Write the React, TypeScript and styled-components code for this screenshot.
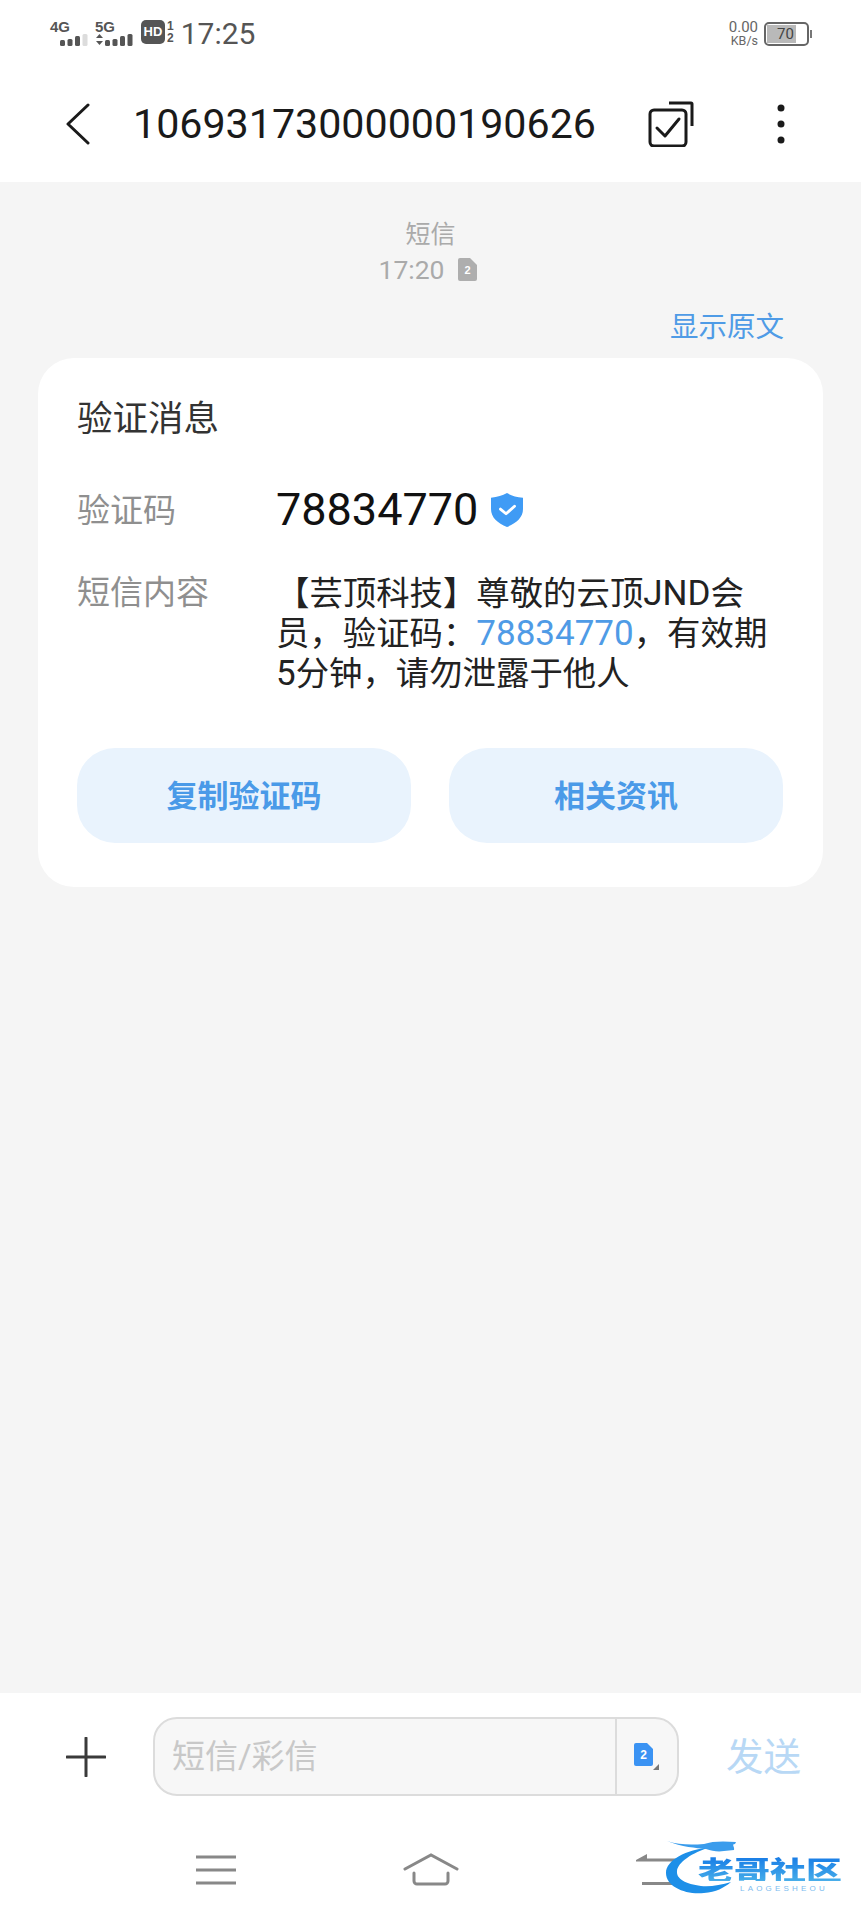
import styled, { createGlobalStyle } from "styled-components";

const GlobalStyle = createGlobalStyle`
  html, body {
    margin: 0;
    padding: 0;
    background: #ffffff;
  }
  * {
    box-sizing: border-box;
  }
`;

const FONT = `Roboto, "Noto Sans CJK SC", sans-serif`;

const Page = styled.div`
  width: 861px;
  height: 1920px;
  display: flex;
  flex-direction: column;
  background: #ffffff;
  font-family: ${FONT};
  overflow: hidden;
`;

// Status bar
const StatusBar = styled.div`
  height: 66px;
  padding: 20px 49px 0 50px;
  display: flex;
  justify-content: space-between;
  align-items: flex-start;
`;

const StatusGroup = styled.div`
  display: flex;
  align-items: flex-start;
`;

const Signal = styled.div`
  display: flex;
  flex-direction: column;
  width: 45px;
`;

const SignalLabel = styled.span`
  font-family: "Liberation Sans", sans-serif;
  font-size: 15px;
  line-height: 13px;
  font-weight: 700;
  color: #555555;
`;

const Clock = styled.span`
  font-size: 30px;
  line-height: 28px;
  color: #555555;
  margin-left: 7px;
`;

const HdBadge = styled.span`
  width: 24px;
  height: 24px;
  margin-left: 1px;
  border-radius: 5px;
  background: #555555;
  color: #ffffff;
  font-family: "Liberation Sans", sans-serif;
  font-size: 13px;
  font-weight: 700;
  line-height: 24px;
  text-align: center;
`;

const SimStack = styled.span`
  display: flex;
  flex-direction: column;
  margin-left: 2px;
  font-family: "Liberation Sans", sans-serif;
  font-weight: 700;
  color: #555555;
  font-size: 12px;
  line-height: 12px;
  text-align: center;
`;

const Speed = styled.div`
  display: flex;
  flex-direction: column;
  align-items: flex-end;
  color: #666666;
  margin-right: 6px;
`;

const SpeedValue = styled.span`
  font-size: 15px;
  line-height: 14px;
`;

const SpeedUnit = styled.span`
  font-size: 12.5px;
  line-height: 14px;
`;

const Battery = styled.div`
  position: relative;
  width: 45px;
  height: 24px;
  border: 2px solid #666666;
  border-radius: 5px;
  color: #444444;
  font-size: 15px;
  line-height: 20px;
  text-align: center;
  margin-top: 2px;
`;

const BatteryFill = styled.div`
  position: absolute;
  left: 1px;
  top: 1px;
  bottom: 1px;
  background: #b9b9b9;
`;

const BatteryText = styled.span`
  position: relative;
  margin-right: 2px;
`;

const BatteryTip = styled.div`
  width: 2px;
  height: 8px;
  background: #777777;
  margin: 10px 0 0 1px;
`;

// Header
const Header = styled.div`
  height: 116px;
  padding-left: 66px;
  display: flex;
  align-items: center;
`;

const HeaderTitle = styled.div`
  font-size: 41.2px;
  line-height: 48px;
  color: #1a1a1a;
  margin-left: 43px;
  width: 464px;
  white-space: nowrap;
`;

const HeaderAction = styled.svg<{ $left: number }>`
  display: block;
  flex: none;
  margin-left: ${({ $left }) => $left}px;
`;

// Conversation
const Conversation = styled.div`
  flex: 1;
  background: #f5f5f5;
  padding: 36px 38px 0;
  display: flex;
  flex-direction: column;
`;

const Meta = styled.div`
  display: flex;
  flex-direction: column;
  align-items: center;
  color: #aaaaaa;
`;

const MetaLabel = styled.div`
  font-size: 25px;
  line-height: 34px;
`;

const MetaTime = styled.div`
  display: flex;
  align-items: center;
  gap: 13px;
  padding-right: 6px;
  font-size: 26.5px;
  line-height: 35px;
`;

const ShowOriginal = styled.div`
  align-self: flex-end;
  margin: 20px 39px 0 0;
  color: #4f9be6;
  font-size: 28.5px;
  line-height: 42px;
`;

const Card = styled.div`
  margin-top: 9px;
  height: 529px;
  background: #ffffff;
  border-radius: 36px;
  padding: 37px 39px 0 39px;
  display: flex;
  flex-direction: column;
`;

const CardTitle = styled.div`
  color: #333333;
  font-size: 35.5px;
  line-height: 48px;
`;

const Row = styled.div<{ $top: number }>`
  display: grid;
  grid-template-columns: 199px 1fr;
  margin-top: ${({ $top }) => $top}px;
`;

const RowLabel = styled.div`
  color: #8f8f8f;
  font-size: 33px;
  line-height: 40px;
`;

const CodeLine = styled.div`
  display: flex;
  align-items: center;
  gap: 13px;
  height: 38px;
  color: #111111;
  font-size: 45px;
  line-height: 38px;
`;

const Body = styled.div`
  color: #222222;
  font-size: 33.4px;
  line-height: 39.8px;
  padding-top: 1px;
`;

const BodyLatin = styled.span`
  font-size: 35px;
`;

const CodeLink = styled(BodyLatin)`
  color: #4f9be6;
`;

const Actions = styled.div`
  display: grid;
  grid-template-columns: 334px 334px;
  gap: 38px;
  margin-top: 55px;
`;

const ActionButton = styled.div`
  height: 95px;
  padding-bottom: 4px;
  border-radius: 38px;
  background: #e9f3fd;
  color: #4a9ae8;
  font-size: 31px;
  font-weight: 700;
  display: flex;
  align-items: center;
  justify-content: center;
`;

// Composer
const Composer = styled.div`
  height: 127px;
  padding-left: 66px;
  display: flex;
  align-items: center;
`;

const InputBox = styled.div`
  width: 526px;
  height: 79px;
  margin-left: 47px;
  border: 2px solid #dcdcdc;
  border-radius: 24px;
  background: #f7f7f7;
  display: flex;
`;

const Placeholder = styled.div`
  flex: 1;
  padding-left: 17px;
  color: #c8c8c8;
  font-size: 33px;
  line-height: 75px;
`;

const SimSwitch = styled.div`
  width: 62px;
  border-left: 2px solid #dcdcdc;
  display: flex;
  align-items: center;
  justify-content: center;
`;

const SendLabel = styled.div`
  margin-left: 47px;
  color: #b8d8f5;
  font-size: 37.5px;
  line-height: 48px;
`;

// Nav bar
const NavBar = styled.div`
  position: relative;
  height: 100px;
  padding-left: 196px;
  display: flex;
  align-items: center;
`;

const NavItem = styled.svg<{ $left: number }>`
  display: block;
  flex: none;
  margin-left: ${({ $left }) => $left}px;
`;

const Watermark = styled.div`
  position: absolute;
  left: 664px;
  top: 18px;
  width: 184px;
  height: 60px;
`;

const WatermarkName = styled.div`
  position: absolute;
  left: 34px;
  top: 12px;
  font-family: "Noto Sans CJK SC", sans-serif;
  font-weight: 900;
  font-size: 36px;
  line-height: 36px;
  white-space: nowrap;
  transform: scaleY(0.72);
  background: linear-gradient(180deg, #1478e6, #45ade9);
  -webkit-background-clip: text;
  background-clip: text;
  color: transparent;
`;

const WatermarkSub = styled.div`
  position: absolute;
  left: 76px;
  top: 46px;
  font-family: "Liberation Sans", sans-serif;
  font-size: 8px;
  line-height: 9px;
  letter-spacing: 3.2px;
  color: #7cbcef;
  white-space: nowrap;
`;

const Bars = ({ levels, dim }: { levels: number[]; dim?: boolean }) => (
  <svg width="38" height="13" viewBox="0 0 38 13" style={{ display: "block" }}>
    {levels.map((h, i) => (
      <rect
        key={i}
        x={i * 7.5 + 10}
        y={13 - h}
        width="5"
        height={h}
        rx="1.5"
        fill={dim && i === 3 ? "#dcdcdc" : "#555555"}
      />
    ))}
    {!dim && <path d="M1 5l3.5-4L8 5zM1 8l3.5 4L8 8z" fill="#555555" />}
  </svg>
);

const SimDoc = ({ fill }: { fill: string }) => (
  <svg width="19" height="23" viewBox="0 0 19 23">
    <path d="M2 0h10l7 7v14a2 2 0 0 1-2 2H2a2 2 0 0 1-2-2V2a2 2 0 0 1 2-2z" fill={fill} />
    <text x="9.5" y="16" textAnchor="middle" fontSize="11" fontWeight="700" fontFamily="Liberation Sans" fill="#ffffff">
      2
    </text>
  </svg>
);

export default function App() {
  return (
    <Page>
      <GlobalStyle />
      <StatusBar>
        <StatusGroup>
          <Signal>
            <SignalLabel>4G</SignalLabel>
            <Bars levels={[6, 7, 10, 12]} dim />
          </Signal>
          <Signal>
            <SignalLabel>5G</SignalLabel>
            <Bars levels={[6, 7, 10, 12]} />
          </Signal>
          <HdBadge>HD</HdBadge>
          <SimStack>
            <span>1</span>
            <span>2</span>
          </SimStack>
          <Clock>17:25</Clock>
        </StatusGroup>
        <StatusGroup>
          <Speed>
            <SpeedValue>0.00</SpeedValue>
            <SpeedUnit>KB/s</SpeedUnit>
          </Speed>
          <Battery>
            <BatteryFill style={{ width: "70%" }} />
            <BatteryText>70</BatteryText>
          </Battery>
          <BatteryTip />
        </StatusGroup>
      </StatusBar>

      <Header>
        <svg width="24" height="42" viewBox="0 0 24 42" fill="none">
          <path d="M22 2L2 21l20 19" stroke="#1a1a1a" strokeWidth="3" strokeLinecap="round" strokeLinejoin="round" />
        </svg>
        <HeaderTitle>10693173000000190626</HeaderTitle>
        <HeaderAction width="46" height="46" viewBox="0 0 46 46" fill="none" stroke="#1a1a1a" strokeWidth="3" $left={51}>
          <path d="M21 2h22a1 1 0 0 1 1 1v22" />
          <rect x="2" y="9" width="36" height="36" rx="4" />
          <path d="M9 27l8 8 14-17" strokeLinecap="round" strokeLinejoin="round" />
        </HeaderAction>
        <HeaderAction width="12" height="42" viewBox="0 0 12 42" fill="#1a1a1a" $left={81}>
          <circle cx="6" cy="5" r="3.5" />
          <circle cx="6" cy="21" r="3.5" />
          <circle cx="6" cy="37" r="3.5" />
        </HeaderAction>
      </Header>

      <Conversation>
        <Meta>
          <MetaLabel>短信</MetaLabel>
          <MetaTime>
            17:20
            <SimDoc fill="#aeaeae" />
          </MetaTime>
        </Meta>
        <ShowOriginal>显示原文</ShowOriginal>
        <Card>
          <CardTitle>验证消息</CardTitle>
          <Row $top={48}>
            <RowLabel>验证码</RowLabel>
            <CodeLine>
              78834770
              <svg width="32" height="34" viewBox="0 0 34 36">
                <path d="M17 0c5 3 10 4 17 5v12c0 9-7 15-17 19C7 32 0 26 0 17V5c7-1 12-2 17-5z" fill="#3f9bf5" />
                <path d="M10 17l6 5 9-8" fill="none" stroke="#ffffff" strokeWidth="3" strokeLinecap="round" strokeLinejoin="round" />
              </svg>
            </CodeLine>
          </Row>
          <Row $top={42}>
            <RowLabel>短信内容</RowLabel>
            <Body>
              【芸顶科技】尊敬的云顶<BodyLatin>JND</BodyLatin>会
              <br />
              员，验证码：<CodeLink>78834770</CodeLink>，有效期
              <br />
              <BodyLatin>5</BodyLatin>分钟，请勿泄露于他人
            </Body>
          </Row>
          <Actions>
            <ActionButton>复制验证码</ActionButton>
            <ActionButton>相关资讯</ActionButton>
          </Actions>
        </Card>
      </Conversation>

      <Composer>
        <svg width="40" height="40" viewBox="0 0 40 40">
          <path d="M20 1v38M1 20h38" stroke="#3a3a3a" strokeWidth="3" strokeLinecap="round" />
        </svg>
        <InputBox>
          <Placeholder>短信/彩信</Placeholder>
          <SimSwitch>
            <svg width="26" height="28" viewBox="0 0 26 28">
              <path d="M2 0h11l6 6v15a2 2 0 0 1-2 2H2a2 2 0 0 1-2-2V2a2 2 0 0 1 2-2z" fill="#3b93f3" />
              <text x="9.5" y="16" textAnchor="middle" fontSize="12" fontWeight="700" fontFamily="Liberation Sans" fill="#ffffff">
                2
              </text>
              <path d="M25 21v6h-6z" fill="#777777" />
            </svg>
          </SimSwitch>
        </InputBox>
        <SendLabel>发送</SendLabel>
      </Composer>

      <NavBar>
        <NavItem width="40" height="30" viewBox="0 0 40 30" $left={0}>
          <path d="M0 2h40M0 15h40M0 28h40" stroke="#888888" strokeWidth="3" />
        </NavItem>
        <NavItem width="56" height="34" viewBox="0 0 56 34" fill="none" $left={167}>
          <path d="M2 16L28 2l26 14" stroke="#888888" strokeWidth="3" strokeLinecap="round" />
          <path d="M11 20v8a3 3 0 0 0 3 3h28a3 3 0 0 0 3-3v-8" stroke="#888888" strokeWidth="3" strokeLinecap="round" />
        </NavItem>
        <NavItem width="46" height="32" viewBox="0 0 46 32" fill="none" $left={177}>
          <path d="M0 6l11-6v4.5h35v3H0z" fill="#888888" />
          <path d="M6 29.5h40" stroke="#888888" strokeWidth="3" />
        </NavItem>
        <Watermark>
          <svg width="76" height="60" viewBox="0 0 76 60">
            <path
              d="M46 9C22 12 2 22 2 35c0 14 20 22 38 20 12-1 20-5 27-11-10 3-21 5-30 4-15-2-25-7-24-15 1-9 15-18 33-24z"
              fill="#1d8fe8"
            />
            <path
              d="M3 3c12 4 24 4 37 3 8-3 20-3 32-2l-1 2c-4 0 0 3-1 6l-10 1c-6 1-12 0-18-2-10-1-24-2-39-8z"
              fill="#3a9cec"
            />
          </svg>
          <WatermarkName>老哥社区</WatermarkName>
          <WatermarkSub>LAOGESHEOU</WatermarkSub>
        </Watermark>
      </NavBar>
    </Page>
  );
}
